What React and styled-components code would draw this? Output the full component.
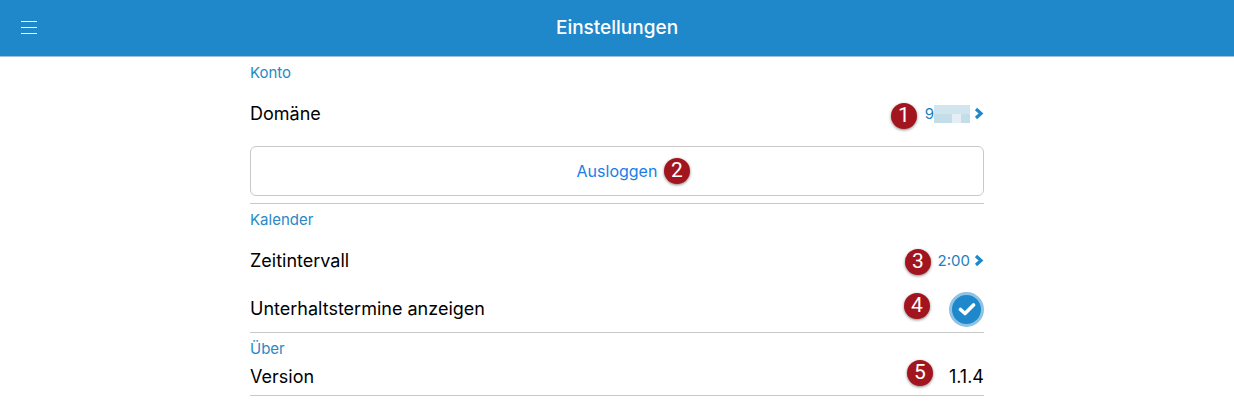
import React, { useState } from 'react'
import styled, { createGlobalStyle } from 'styled-components'

const GlobalStyle = createGlobalStyle`
  body {
    margin: 0;
    background: #fff;
    color: #000;
    font-family: Inter, "Liberation Sans", sans-serif;
    font-size: 18px;
    line-height: 24px;
  }
  button {
    font-family: inherit;
    cursor: pointer;
  }
`;
const Header = styled.header`
  display: grid;
  grid-template-columns: 58px 1fr 58px;
  align-items: center;
  height: 56px;
  background: #1e88ca;
  border-bottom: 1px solid #a4c0d8;
  color: #fff;
`;
const MenuButton = styled.button`
  display: flex;
  justify-content: center;
  padding: 16px 0;
  border: 0;
  background: none;
  color: inherit;
`;
const Title = styled.h1`
  margin: 0;
  font-size: 19px;
  line-height: 24px;
  font-weight: 500;
  text-align: center;
`;
const Content = styled.main`
  width: 60%;
  min-width: 300px;
  max-width: 734px;
  margin: 0 auto;
`;
const Section = styled.section`
  border-bottom: 1px solid #c8c8c8;
`;
const SectionTitle = styled.h2`
  margin: 0;
  padding: ${props => (props.$compact ? '6px 0 0' : '6px 0')};
  color: #2889c5;
  font-size: 15px;
  line-height: 20px;
  font-weight: 400;
`;
const Row = styled.div`
  position: relative;
  display: flex;
  align-items: center;
  justify-content: space-between;
  box-sizing: border-box;
  height: ${props => (props.$compact ? '36px' : '48px')};
  padding-top: ${props => (props.$compact ? '0' : '2px')};
`;
const ValueButton = styled.button`
  display: flex;
  align-items: center;
  gap: 4px;
  padding: 0;
  border: 0;
  background: none;
  color: #1e80bd;
  font-size: 15px;
  line-height: 20px;
`;
const Masked = styled.span`
  display: grid;
  grid-template-columns: 18px 9px 9px;
  grid-template-rows: 9px 9px;
  & i:nth-child(-n + 3) {
    background: #d0e5ee;
  }
  & i:nth-child(n + 4) {
    background: #c3dde9;
  }
  & i:nth-child(5) {
    background: #e5edf5;
  }
`;
const MaskedValue = styled.span`
  display: flex;
  align-items: center;
`;
const LogoutButton = styled.button`
  position: relative;
  display: block;
  width: 100%;
  height: 50px;
  margin: 9px 0 7px;
  border: 1px solid #c8c8c8;
  border-radius: 6px;
  background: #fff;
  color: #1a7ee6;
  font-size: 16px;
  line-height: 24px;
`;
// numbered marker laid over a row
const Marker = styled.span`
  position: absolute;
  top: ${props => props.$top}px;
  right: ${props => props.$right};
  width: 26px;
  height: 26px;
  border-radius: 50%;
  background: #a3151e;
  box-shadow: 0 1px 3px rgba(0, 0, 0, 0.5);
  color: #fff;
  font-family: Roboto, sans-serif;
  font-size: 21px;
  line-height: 25px;
  text-align: center;
`;
const CheckWrap = styled.span`
  display: grid;
  place-items: center;
  & > * {
    grid-area: 1 / 1;
  }
  & svg {
    pointer-events: none;
  }
`;
const Checkbox = styled.input`
  appearance: none;
  width: 35px;
  height: 35px;
  margin: 0;
  border: 3px solid #8fc3e6;
  border-radius: 50%;
  background: ${props => (props.checked ? '#1e88ca' : '#fff')};
  cursor: pointer;
`;

const MenuIcon = () => (
    <svg width="16" height="14" viewBox="0 0 16 14" aria-hidden="true">
        <path d="M0 .5h16M0 6.5h16M0 12.5h16" stroke="currentColor" strokeWidth="1.2" />
    </svg>
);
const Chevron = () => (
    <svg width="10" height="14" viewBox="0 0 10 14" aria-hidden="true">
        <path d="M2 2l5 4.5-5 4.5" fill="none" stroke="#1e88ca" strokeWidth="3.2" />
    </svg>
);
const CheckIcon = () => (
    <svg width="18" height="14" viewBox="0 0 18 14" aria-hidden="true">
        <path d="M2.5 7.5l4.5 4 8.5-8.5" fill="none" stroke="#fff" strokeWidth="3.6" strokeLinecap="round" strokeLinejoin="round" />
    </svg>
);

export default function App() {
    const [showTerms, setShowTerms] = useState(true);

    return (
        <>
            <GlobalStyle />
            <Header>
                <MenuButton type="button" aria-label="Menü">
                    <MenuIcon />
                </MenuButton>
                <Title>Einstellungen</Title>
            </Header>
            <Content>
                <Section>
                    <SectionTitle>Konto</SectionTitle>
                    <Row>
                        <span id="domain">Domäne</span>
                        <Marker $top={14} $right="67px">1</Marker>
                        <ValueButton type="button" aria-labelledby="domain">
                            <MaskedValue>
                                9
                                <Masked>
                                    <i /><i /><i /><i /><i /><i />
                                </Masked>
                            </MaskedValue>
                            <Chevron />
                        </ValueButton>
                    </Row>
                    <LogoutButton type="button">
                        Ausloggen
                        <Marker $top={11} $right="calc(50% - 73px)">2</Marker>
                    </LogoutButton>
                </Section>
                <Section>
                    <SectionTitle>Kalender</SectionTitle>
                    <Row>
                        <span id="interval">Zeitintervall</span>
                        <Marker $top={13} $right="53px">3</Marker>
                        <ValueButton type="button" aria-labelledby="interval">
                            2:00
                            <Chevron />
                        </ValueButton>
                    </Row>
                    <Row>
                        <label htmlFor="show-terms">Unterhaltstermine anzeigen</label>
                        <Marker $top={9} $right="54px">4</Marker>
                        <CheckWrap>
                            <Checkbox
                                type="checkbox"
                                id="show-terms"
                                checked={showTerms}
                                onChange={e => setShowTerms(e.target.checked)}
                            />
                            {showTerms && <CheckIcon />}
                        </CheckWrap>
                    </Row>
                </Section>
                <Section>
                    <SectionTitle $compact>Über</SectionTitle>
                    <Row $compact>
                        <span>Version</span>
                        <Marker $top={1} $right="51px">5</Marker>
                        <span>1.1.4</span>
                    </Row>
                </Section>
            </Content>
        </>
    )
}
